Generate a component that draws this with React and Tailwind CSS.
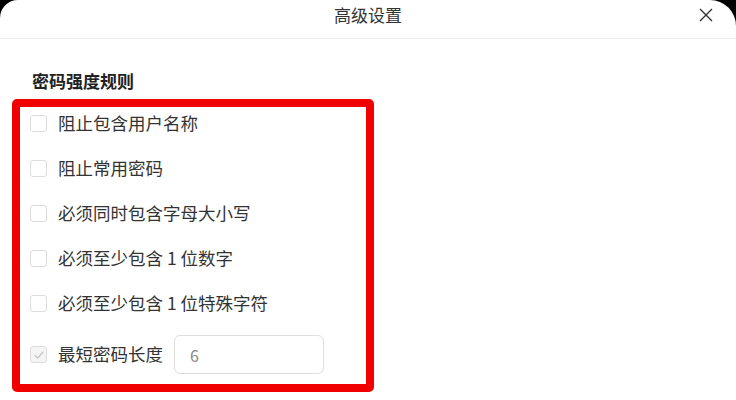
import { useState } from "react";

const rules = [
  "阻止包含用户名称",
  "阻止常用密码",
  "必须同时包含字母大小写",
  "必须至少包含 1 位数字",
  "必须至少包含 1 位特殊字符",
];

function Box({ checked, disabled }) {
  return (
    <span
      className={`flex h-[17px] w-[17px] shrink-0 items-center justify-center rounded-[3px] border border-[#dcdcdc] ${
        disabled ? "bg-[#f5f5f5]" : "bg-white"
      }`}
    >
      {checked && (
        <svg viewBox="0 0 16 16" className="h-[12px] w-[12px]" fill="none" stroke="#c4c4c4" strokeWidth="1.6">
          <path d="M2.5 8.5l3.5 3.5 7.5-8" strokeLinecap="round" strokeLinejoin="round" />
        </svg>
      )}
    </span>
  );
}

export default function App() {
  const [checked, setChecked] = useState(rules.map(() => false));
  const [len, setLen] = useState("6");

  return (
    <div
      className="h-[400px] w-[736px] overflow-hidden bg-black"
      style={{ fontFamily: '"Noto Sans CJK SC", "Noto Sans", sans-serif' }}
    >
      <div className="h-full rounded-tl-[18px] rounded-tr-[26px] bg-white">
        {/* header */}
        <div className="relative flex h-[39px] items-start justify-center border-b border-[#ececec]">
          <span className="mt-[2px] text-[17px] leading-[26px] text-[#333]">高级设置</span>
          <button className="absolute right-[23px] top-[8px] text-[#333]" aria-label="关闭">
            <svg viewBox="0 0 14 14" className="h-[14px] w-[14px]" stroke="currentColor" strokeWidth="1.4">
              <path d="M1 1l12 12M13 1L1 13" />
            </svg>
          </button>
        </div>

        <div className="px-[12px]">
          <h2 className="ml-[20px] mt-[29px] text-[17px] font-semibold leading-[26px] text-[#222]">密码强度规则</h2>

          <div className="mt-[5px] w-[362px] rounded-[5px] border-[8px] border-[#f00000] pb-[10px] pl-[10px] pt-[4px]">
            <div className="flex flex-col gap-[21px]">
              {rules.map((r, i) => (
                <label
                  key={r}
                  className="flex h-[24px] cursor-pointer items-center gap-[11px]"
                  onClick={() => setChecked(checked.map((c, j) => (j === i ? !c : c)))}
                >
                  <Box checked={checked[i]} />
                  <span className="text-[17.5px] text-[#333]">{r}</span>
                </label>
              ))}
              <div className="-mt-[1px] flex h-[39px] items-center">
                <Box checked disabled />
                <span className="ml-[11px] text-[17.5px] text-[#333]">最短密码长度</span>
                <input
                  value={len}
                  onChange={(e) => setLen(e.target.value)}
                  className="ml-[11px] h-[39px] w-[150px] rounded-[6px] border border-[#dedede] px-[15px] text-[16px] text-[#888] outline-none"
                />
              </div>
            </div>
          </div>
        </div>
      </div>
    </div>
  );
}
